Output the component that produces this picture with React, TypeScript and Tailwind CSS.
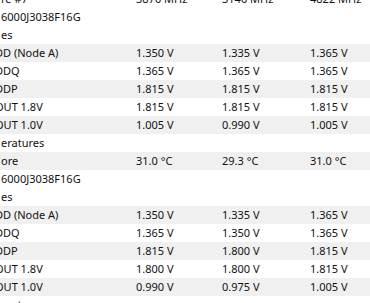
import React from "react";

type Row = { label: string; shift?: boolean; vals?: [string, string, string]; grey?: boolean };

const rows: Row[] = [
  { label: "re #7", vals: ["3870 MHz", "3140 MHz", "4822 MHz"] },
  { label: "6000J3038F16G" },
  { label: "es" },
  { label: "DD (Node A)", shift: true, vals: ["1.350 V", "1.335 V", "1.365 V"], grey: true },
  { label: "DDQ", shift: true, vals: ["1.365 V", "1.365 V", "1.365 V"] },
  { label: "DDP", shift: true, vals: ["1.815 V", "1.815 V", "1.815 V"], grey: true },
  { label: "OUT 1.8V", shift: true, vals: ["1.815 V", "1.815 V", "1.815 V"] },
  { label: "OUT 1.0V", shift: true, vals: ["1.005 V", "0.990 V", "1.005 V"], grey: true },
  { label: "eratures" },
  { label: "ore", vals: ["31.0 °C", "29.3 °C", "31.0 °C"], grey: true },
  { label: "6000J3038F16G" },
  { label: "es" },
  { label: "DD (Node A)", shift: true, vals: ["1.350 V", "1.335 V", "1.365 V"], grey: true },
  { label: "DDQ", shift: true, vals: ["1.365 V", "1.350 V", "1.365 V"] },
  { label: "DDP", shift: true, vals: ["1.815 V", "1.800 V", "1.815 V"], grey: true },
  { label: "OUT 1.8V", shift: true, vals: ["1.800 V", "1.800 V", "1.815 V"] },
  { label: "OUT 1.0V", shift: true, vals: ["0.990 V", "0.975 V", "1.005 V"], grey: true },
  { label: "eratures" },
];

export default function App() {
  return (
    <div
      className="w-[370px] h-[303px] overflow-hidden bg-white text-[11px] text-[#111]"
      style={{ fontFamily: '"Noto Sans", "Open Sans", sans-serif' }}
    >
      <div className="-mt-[10px] flex flex-col">
        {rows.map((r, i) => (
          <div
            key={i}
            className={`grid h-[18px] grid-cols-[136px_86px_88px_1fr] items-center leading-[18px] ${r.grey ? "bg-[#f0f0f0]" : "bg-white"}`}
          >
            <div className="overflow-hidden whitespace-nowrap">
              <span className={r.shift ? "-ml-[5px] inline-block" : "ml-[1px] inline-block"}>{r.label}</span>
            </div>
            {r.vals ? (
              <>
                <div className="whitespace-nowrap">{r.vals[0]}</div>
                <div className="whitespace-nowrap">{r.vals[1]}</div>
                <div className="whitespace-nowrap">{r.vals[2]}</div>
              </>
            ) : null}
          </div>
        ))}
      </div>
    </div>
  );
}
